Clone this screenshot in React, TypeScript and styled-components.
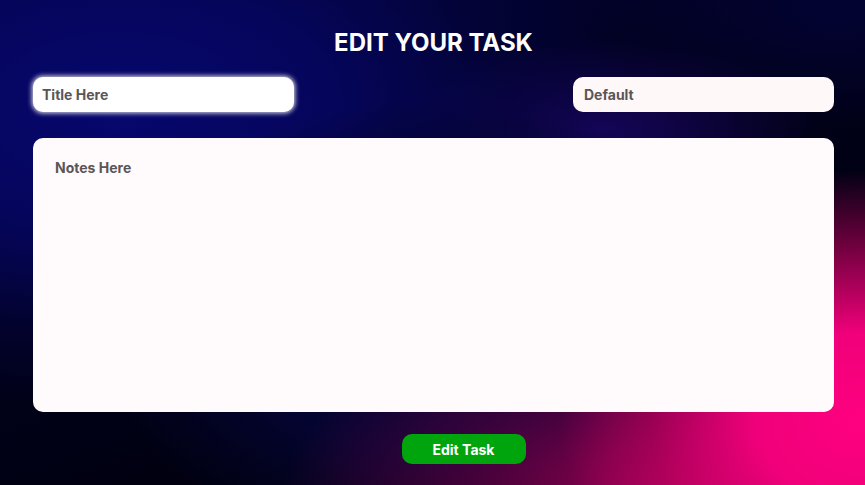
import styled, {createGlobalStyle} from 'styled-components';
import {useState, ChangeEvent} from 'react';

const GlobalStyle = createGlobalStyle`
  * {
    box-sizing: border-box;
  }

  body {
    margin: 0;
    font-family: Inter, "Noto Sans", sans-serif;
  }
`;

const Page = styled.div`
  height: 100vh;
  min-height: 485px;
  display: flex;
  flex-direction: column;
  align-items: center;
  padding: 29px 31px 0 33px;
  background:
    radial-gradient(ellipse 300px 250px at 860px 420px, #ff0080 0%, #f0007a 35%, rgba(200, 0, 100, .55) 70%, rgba(120, 0, 70, 0) 100%),
    radial-gradient(ellipse 420px 200px at 700px 500px, rgba(190, 0, 100, .9) 0%, rgba(110, 0, 70, .6) 55%, rgba(40, 0, 40, 0) 100%),
    radial-gradient(ellipse 330px 230px at 430px 330px, #06043a 0%, #040430 55%, rgba(4, 4, 48, 0) 100%),
    radial-gradient(ellipse 520px 300px at 120px 110px, #07076e 0%, #05055c 40%, rgba(4, 4, 70, .4) 75%, rgba(0, 0, 40, 0) 100%),
    radial-gradient(ellipse 220px 90px at 600px 130px, rgba(30, 6, 110, .75) 0%, rgba(30, 6, 110, 0) 100%),
    radial-gradient(ellipse 200px 120px at 840px 10px, rgba(4, 4, 60, .7) 0%, rgba(0, 0, 20, 0) 100%),
    linear-gradient(160deg, #030340 0%, #01011a 45%, #000004 100%);
`;

const Heading = styled.h1`
  margin: 0 0 20px;
  color: #fff;
  font-size: 24px;
  font-weight: 700;
  line-height: 28px;
`;

const Row = styled.div`
  display: flex;
  justify-content: space-between;
  width: 100%;
  margin-bottom: 26px;
`;

const Field = styled.input<{ $glow?: boolean }>`
  width: 261px;
  height: 35px;
  border: none;
  outline: none;
  border-radius: 10px;
  padding: 0 ${({$glow}) => $glow ? '9px' : '11px'};
  background-color: ${({$glow}) => $glow ? '#fff' : '#fff8f8'};
  box-shadow: ${({$glow}) => $glow ? '0 0 5px 1px rgba(255, 255, 255, .9)' : 'none'};
  font-family: Inter, sans-serif;
  font-size: 14px;
  font-weight: 700;
  color: #5a5557;

  &::placeholder {
    color: #5a5557;
  }
`;

const Notes = styled.textarea`
  width: 100%;
  height: 274px;
  border: none;
  outline: none;
  resize: none;
  border-radius: 10px;
  padding: 20px 22px;
  background-color: #fffbfd;
  font-family: Inter, sans-serif;
  font-size: 14px;
  font-weight: 700;
  line-height: 20px;
  color: #5a5557;

  &::placeholder {
    color: #5a5557;
  }
`;

const Button = styled.button`
  margin: 22px 0 0 60px;
  width: 124px;
  height: 30px;
  border: none;
  border-radius: 10px;
  background-color: #00a50e;
  color: #fff;
  font-family: Inter, sans-serif;
  font-size: 14px;
  font-weight: 700;
  cursor: pointer;
`;

const App = () => {
  const [title, setTitle] = useState<string>('');
  const [category, setCategory] = useState<string>('');
  const [notes, setNotes] = useState<string>('');

  return (
    <Page>
      <GlobalStyle/>
      <Heading>EDIT YOUR TASK</Heading>
      <Row>
        <Field $glow placeholder="Title Here" value={title}
               onChange={(e: ChangeEvent<HTMLInputElement>) => setTitle(e.target.value)}/>
        <Field placeholder="Default" value={category}
               onChange={(e: ChangeEvent<HTMLInputElement>) => setCategory(e.target.value)}/>
      </Row>
      <Notes placeholder="Notes Here" value={notes}
             onChange={(e: ChangeEvent<HTMLTextAreaElement>) => setNotes(e.target.value)}/>
      <Button>Edit Task</Button>
    </Page>
  );
};

export default App;
